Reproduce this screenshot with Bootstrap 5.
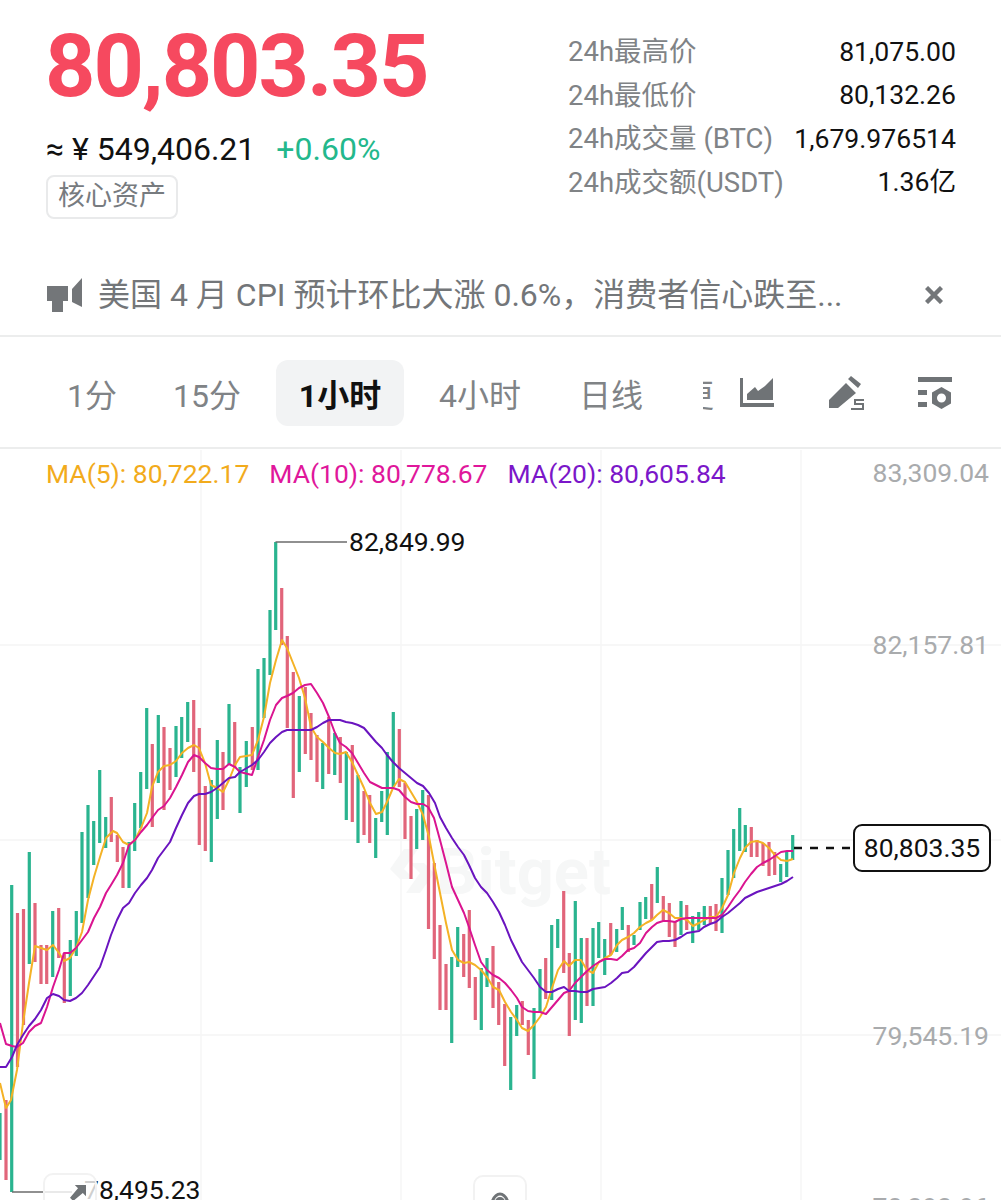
<!DOCTYPE html>
<html lang="zh-CN">
<head>
  <meta charset="UTF-8" />
  <meta name="viewport" content="width=device-width, initial-scale=1.0"/>
  <title>BTC/USDT</title>
  <link href="https://cdn.jsdelivr.net/npm/bootstrap@5.3.2/dist/css/bootstrap.min.css" rel="stylesheet" />
  <style>
    html, body { height: 1200px; overflow: hidden; background: #fff; }
    body { font-family: Roboto, "Noto Sans CJK SC", sans-serif; color: #111; }
    .quote-head { height: 260px; padding: 0 45px 0 46px; }
    .big-price { font-size: 88px; font-weight: 700; line-height: 1; color: #f6495f; margin: 22px 0 0 -1px; letter-spacing: -2px; }
    .cny-line { font-size: 32px; line-height: 1; margin-top: 23px; gap: 21px; }
    .up-pct { color: #23b88c; }
    .tag-core { display: inline-block; margin-top: 10px; height: 44px; padding: 0 10px; border: 2px solid #e9eaeb; border-radius: 8px; font-size: 27px; line-height: 38px; color: #777b7f; }
    .stat-table { width: 388px; padding-top: 30px; }
    .stat-row { height: 43.5px; }
    .stat-name { color: #808386; font-size: 27.5px; }
    .stat-val { color: #111; font-size: 26.6px; }
    .notice-bar { height: 77px; padding: 0 58px 6px 46px; font-size: 32px; color: #737679; gap: 16px; border-bottom: 2px solid #eceded; }
    .notice-text { flex: 1; white-space: nowrap; }
    .period-bar { height: 112px; padding-left: 48px; padding-top: 1px; border-bottom: 2px solid #eceded; font-size: 32px; color: #808386; overflow: hidden; }
    .period-item { height: 66px; line-height: 72px; text-align: center; border-radius: 12px; flex: none; white-space: nowrap; }
    .period-1m { width: 88px; }
    .period-15m { width: 140px; padding-left: 2px; }
    .period-1h { width: 128px; }
    .period-4h { width: 152px; }
    .period-1d { width: 110px; }
    .period-more { width: 11px; margin-left: 37px; overflow: hidden; direction: rtl; }
    .period-on { background: #f2f3f4; color: #111; font-weight: 700; }
    .tool-icons { flex: 1; padding-left: 26px; gap: 54px; }
    .chart-box { position: relative; height: 751px; overflow: hidden; }
    .chart-box svg { display: block; }
    #kline { position: relative; z-index: 1; }
    .ma-legend { position: absolute; z-index: 2; left: 46px; top: 5px; font-size: 26.5px; gap: 20px; white-space: nowrap; }
    .ma5 { color: #f2ab1c; }
    .ma10 { color: #e0179b; }
    .ma20 { color: #7b17c9; }
    .axis-label { position: absolute; z-index: 2; right: 12px; font-size: 26.5px; color: #a9abad; line-height: 1; }
    .axis-a { top: 11px; }
    .axis-b { top: 183px; }
    .axis-c { top: 574px; }
    .axis-d { top: 745px; }
    .hi-label, .lo-label { position: absolute; z-index: 2; font-size: 26.5px; line-height: 1; color: #111; }
    .hi-label { left: 349px; top: 80px; }
    .lo-label { left: 84px; top: 728px; }
    .now-label { position: absolute; z-index: 2; left: 853px; top: 375px; width: 138px; height: 48px; background: #fff; border: 2px solid #111; border-radius: 9px; font-size: 26.5px; line-height: 43px; text-align: center; color: #111; }
    .float-btn { position: absolute; z-index: 3; width: 54px; height: 60px; background: rgba(255,255,255,.8); border: 2px solid #f2f2f2; border-radius: 10px; }
    .btn-jump { left: 43px; top: 724px; }
    .btn-jump svg { display: block; margin: 10px 0 0 25px; }
    .btn-eye { left: 473px; top: 726px; }
    .btn-eye svg { display: block; margin: 15px auto 0; }
    .watermark { position: absolute; left: 436px; top: 391px; font-size: 65px; font-weight: 700; color: #f6f7f7; line-height: 1; }
    .watermark-logo { position: absolute; left: 390px; top: 398px; }
  </style>
</head>
<body>
  <div class="quote-head d-flex justify-content-between">
    <div>
      <div class="big-price">80,803.35</div>
      <div class="cny-line d-flex"><span>≈ ¥ 549,406.21</span><span class="up-pct">+0.60%</span></div>
      <span class="tag-core">核心资产</span>
    </div>
    <div class="stat-table">
      <div class="stat-row d-flex justify-content-between align-items-center"><span class="stat-name">24h最高价</span><span class="stat-val">81,075.00</span></div>
      <div class="stat-row d-flex justify-content-between align-items-center"><span class="stat-name">24h最低价</span><span class="stat-val">80,132.26</span></div>
      <div class="stat-row d-flex justify-content-between align-items-center"><span class="stat-name">24h成交量 (BTC)</span><span class="stat-val">1,679.976514</span></div>
      <div class="stat-row d-flex justify-content-between align-items-center"><span class="stat-name">24h成交额(USDT)</span><span class="stat-val">1.36亿</span></div>
    </div>
  </div>

  <div class="notice-bar d-flex align-items-center">
    <svg width="36" height="35" viewBox="0 0 36 35" fill="#737679"><path d="M1 9h21v15H17v11H6V24H1zM26 12l10-11v29l-10-5z"/></svg>
    <span class="notice-text">美国 4 月 CPI 预计环比大涨 0.6%，消费者信心跌至...</span>
    <svg width="18" height="18" viewBox="0 0 18 18" stroke="#737679" stroke-width="4.400"><path d="M1.500 1.500l15 15M16.500 1.500l-15 15"/></svg>
  </div>

  <div class="period-bar d-flex align-items-center">
    <div class="period-item period-1m">1分</div>
    <div class="period-item period-15m">15分</div>
    <div class="period-item period-1h period-on">1小时</div>
    <div class="period-item period-4h">4小时</div>
    <div class="period-item period-1d">日线</div>
    <div class="period-item period-more">更</div>
    <div class="tool-icons d-flex align-items-center">
      <svg width="34" height="29" viewBox="0 0 34 29" fill="#6f7376"><path d="M0 0h3v25h31v4H0z"/><path d="M7 22v-6l8-7 3 4 7-5 8-8v22z"/></svg>
      <svg width="36" height="35" viewBox="0 0 36 35" fill="#6f7376"><path d="M1 33v-8L18 8l10 10-18 15zM23 1l10 8-3 4-10-9z"/><path d="M36 25h-9v4h8v5H23" fill="none" stroke="#6f7376" stroke-width="2"/></svg>
      <svg width="34" height="32" viewBox="0 0 34 32" fill="#6f7376"><path d="M0 0h34v5H0zM0 13h9v5H0zM0 25h9v5H0z"/><path d="M23.500 10l9.500 5.500v11l-9.500 5.500-9.500-5.500v-11zM23.500 16.500a4.500 4.500 0 1 0 0 9 4.500 4.500 0 0 0 0-9z" fill-rule="evenodd"/></svg>
    </div>
  </div>

  <div class="chart-box">
    <svg class="watermark-logo" width="44" height="48" viewBox="0 0 44 48" fill="#f6f7f7"><path d="M14 2h14L14 22l10 10h-14L0 22zM30 46H16l14-20-10-10h14l10 10z"/></svg>
    <div class="watermark">Bitget</div>
    <svg id="kline" width="1001" height="751" viewBox="0 449 1001 751"></svg>
    <div class="ma-legend d-flex">
      <span class="ma5">MA(5): 80,722.17</span>
      <span class="ma10">MA(10): 80,778.67</span>
      <span class="ma20">MA(20): 80,605.84</span>
    </div>
    <div class="axis-label axis-a">83,309.04</div>
    <div class="axis-label axis-b">82,157.81</div>
    <div class="axis-label axis-c">79,545.19</div>
    <div class="axis-label axis-d">78,393.96</div>
    <div class="hi-label">82,849.99</div>
    <div class="lo-label">78,495.23</div>
    <div class="now-label">80,803.35</div>
    <div class="float-btn btn-jump">
      <svg width="16" height="16" viewBox="0 0 20 20" fill="#6f7376"><path d="M6 0h14v14l-4-4L4 20l-4-4L10 4z"/></svg>
    </div>
    <div class="float-btn btn-eye">
      <svg width="24" height="20" viewBox="0 0 24 20" fill="none" stroke="#6f7376" stroke-width="3"><path d="M2 18C4 7 7 2 12 2s8 5 10 16"/><circle cx="12" cy="10" r="3.500"/></svg>
    </div>
  </div>

  <script>
    // [x, top, bottom, up?]
    const candles = [
      [0,1113,1160,1],[6,1100,1180,0],[11.7,885,1192,1],[17.5,913,1067,0],[23.5,909,1025,0],[29.3,852,964,1],[35,903,962,0],[41,945,984,0],[46.7,945,984,0],[52.7,911,977,1],[58.7,908,958,0],[64.3,953,1003,0],[70.3,940,996,1],[76.3,911,956,1],[82,832,923,1],[88,805,898,1],[93.7,821,865,1],[99.7,770,843,1],[105.7,817,848,1],[111.3,797,842,0],[117.3,835,862,0],[123,847,888,0],[129,842,888,1],[134.7,803,851,1],[140.7,772,828,1],[146.7,708,789,1],[152.3,744,827,0],[158.3,715,783,1],[164,727,810,0],[170,748,790,0],[176,726,777,1],[181.7,717,758,1],[187.7,702,742,1],[193.7,700,772,0],[199.3,728,845,0],[205.3,786,851,0],[211.3,780,862,1],[217.3,740,819,1],[223,752,810,0],[229,704,765,1],[234.7,722,768,0],[240,767,813,1],
      [246.3,741,787,1],[252.3,727,770,0],[258,669,770,1],[264,658,718,1],[270,610,675,1],[275.7,542,630,1],[281.7,588,645,0],[287.3,636,728,0],[293.3,672,798,0],[299.3,696,772,1],[305.3,687,754,0],[311,713,760,0],[317,735,782,0],[322.7,743,789,1],[328.7,717,774,0],[334.7,733,775,1],[340.3,737,783,0],[346.3,752,820,1],[352.3,745,822,0],[358,775,843,1],[364,791,835,0],[369.7,795,843,0],[375.7,818,858,1],[381.7,791,822,1],[387.3,752,835,1],[393.3,712,787,1],[399.3,729,787,0],[405,783,839,0],[411,816,879,0],[416.7,809,849,1],[422.7,790,840,1],[428.5,795,929,0],
      [434.3,863,959,0],[440,925,1010,0],[446,964,1010,0],[451.7,957,1043,1],[457.7,927,967,1],[463.7,934,977,0],[469.3,910,988,0],[475.3,977,1020,0],[481.3,968,1030,1],[487,958,987,1],[493,946,1008,0],[498.7,982,1025,0],[504.7,1004,1066,0],[510.7,1017,1090,1],[516.7,1005,1036,1],[522.3,1001,1025,0],[528.3,1020,1055,0],[534,1008,1079,1],[540,969,1013,1],[545.7,958,999,0],[551.7,925,1000,1],[557.7,919,948,1],[563.7,891,973,0],[569.3,953,1036,0],[575.3,901,1020,1],[581.3,938,1023,1],[587,938,1006,0],[593,928,1006,1],[598.7,922,958,1],[604.7,939,975,1],[610.7,923,955,0],[616.7,929,952,1],[622.3,907,930,1],[628.3,925,952,0],[634,935,945,1],
      [640,902,930,1],[645.7,897,919,1],[651.7,884,920,0],[657.3,867,903,1],[663.3,896,920,0],[669.3,903,937,0],[675,922,947,0],[681,901,935,1],[686.7,905,930,0],[692.7,916,943,1],[698.7,912,930,1],[704.3,906,925,1],[710.3,906,923,0],[716,904,931,0],[722,878,933,1],[728,850,895,1],[733.7,829,878,1],[739.7,808,851,1],[745.3,825,852,1],[751.3,827,857,0],[757,840,857,0],[763,843,866,0],[769,842,876,0],[774.7,852,875,0],[780.7,864,882,1],[786.7,851,877,1],[792.7,835,860,1]
    ];
    const ma5 = "0,1083 6,1108 11,1100 17,1070 23,1023 29,983 35,946 41,948 47,950 53,945 59,953 64,961 70,958 76,948 82,932 88,900 94,877 100,857 106,838 113,831 117,833 123,842 129,845 135,840 141,828 147,813 152,787 158,772 164,766 170,765 176,761 182,753 188,748 194,745 199,748 205,763 211,785 217,788 223,792 229,780 235,765 240,757 252,755 258,740 264,717 270,683 276,660 282,640 287,648 293,663 299,678 305,698 311,727 317,737 323,742 329,748 335,753 340,754 346,752 352,762 358,775 364,788 370,803 376,814 382,812 387,802 393,788 399,779 405,782 411,792 417,802 423,815 429,837 434,863 440,893 446,923 452,950 458,960 464,963 469,962 475,965 481,970 487,977 493,987 499,990 505,1002 511,1012 517,1020 522,1028 528,1031 534,1025 540,1017 546,1007 552,988 558,970 564,961 569,966 575,960 581,960 587,970 593,973 599,962 605,958 611,955 617,945 622,940 628,937 634,933 640,927 646,923 652,920 657,915 663,910 669,913 675,918 681,918 687,920 693,926 699,923 704,920 710,917 716,917 722,908 728,895 734,873 740,858 745,848 751,842 757,841 763,843 769,848 775,855 781,860 787,861 793,859";
    const ma10 = "0,1023 6,1044 12,1046 17,1047 23,1043 29,1032 35,1026 41,1023 47,1007 53,987 59,970 64,953 70,953 76,948 82,940 88,932 94,918 100,907 106,893 111,885 117,875 123,863 129,845 135,840 141,832 147,825 152,818 158,810 164,806 170,798 176,787 182,775 188,762 194,755 199,757 205,763 211,768 217,769 223,769 229,764 235,767 240,772 252,775 258,757 264,740 270,720 276,705 282,698 287,696 293,693 299,688 305,685 311,684 317,693 323,703 329,717 335,733 340,743 346,747 352,753 358,763 364,773 370,782 376,785 382,788 387,788 393,788 399,790 405,797 411,802 417,804 423,804 428,807 434,818 440,840 446,863 452,887 458,900 464,913 469,927 475,945 481,962 487,970 493,975 499,978 505,983 511,990 517,998 522,1007 528,1011 534,1012 540,1012 546,1014 552,1007 558,1000 564,993 569,991 575,983 581,977 587,971 593,966 599,962 605,959 611,959 617,960 622,956 628,950 634,948 640,943 646,933 652,927 657,923 663,921 669,921 675,922 681,919 687,918 693,918 699,918 704,918 710,918 716,918 722,915 728,907 734,898 740,890 745,882 751,874 757,867 763,863 769,860 775,856 781,852 787,851 793,851";
    const ma20 = "0,1067 6,1067 12,1057 17,1045 23,1035 29,1026 35,1019 41,1010 47,998 53,994 59,996 64,1000 70,1001 76,998 82,993 88,985 94,976 100,967 106,950 111,935 117,920 123,908 129,903 135,893 141,885 147,878 152,870 158,858 164,850 170,842 176,828 182,815 188,803 194,796 199,794 205,794 211,792 217,788 223,783 229,778 235,777 240,772 252,765 258,760 264,752 270,743 276,737 282,732 287,730 293,730 299,730 305,730 311,730 317,727 323,723 329,720 335,720 340,720 346,722 352,723 358,725 364,728 370,735 376,742 382,748 387,755 393,762 399,768 405,773 411,778 417,783 423,786 429,793 435,803 440,817 446,828 452,838 458,847 464,855 469,865 475,878 481,887 487,893 493,902 499,912 505,925 511,940 517,952 522,962 528,970 534,978 540,987 546,992 552,992 558,989 564,987 569,991 575,991 581,992 587,992 593,989 599,988 605,987 611,983 617,978 622,973 628,972 634,967 640,960 646,953 652,947 657,942 663,941 669,941 675,940 681,937 687,933 693,932 699,931 704,927 710,924 716,922 722,917 728,913 734,908 740,903 745,898 751,895 757,892 763,890 769,888 775,886 781,884 787,881 793,877";

    let svg = "";
    // grid
    [645, 840, 1035].forEach(y => { svg += `<line x1="0" x2="1001" y1="${y}" y2="${y}" stroke="#f5f5f5" stroke-width="1.500"/>`; });
    [201, 401, 601, 801].forEach(x => { svg += `<line x1="${x}" x2="${x}" y1="450" y2="1200" stroke="#f6f6f6" stroke-width="1.500"/>`; });
    // candles
    candles.forEach(c => {
      svg += `<rect x="${c[0] - 1.6}" y="${c[1]}" width="3.2" height="${c[2] - c[1]}" fill="${c[3] ? "#2ab48f" : "#e1657a"}"/>`;
    });
    // moving averages
    [[ma5, "#f4b226"], [ma10, "#da1490"], [ma20, "#6a14bf"]].forEach(l => {
      svg += `<polyline points="${l[0]}" fill="none" stroke="${l[1]}" stroke-width="2" stroke-linejoin="round"/>`;
    });
    // high / low leader lines, last price dash
    svg += `<path d="M275.500 542H347" stroke="#6b6b6b" stroke-width="1.500" fill="none"/>`;
    svg += `<path d="M12 1192H72" stroke="#6b6b6b" stroke-width="1.500" fill="none"/>`;
    svg += `<line x1="794" x2="853" y1="848" y2="848" stroke="#111" stroke-width="2.500" stroke-dasharray="8 8"/>`;
    document.getElementById("kline").innerHTML = svg;
  </script>
  <script src="https://cdn.jsdelivr.net/npm/bootstrap@5.3.2/dist/js/bootstrap.bundle.min.js"></script>
</body>
</html>
